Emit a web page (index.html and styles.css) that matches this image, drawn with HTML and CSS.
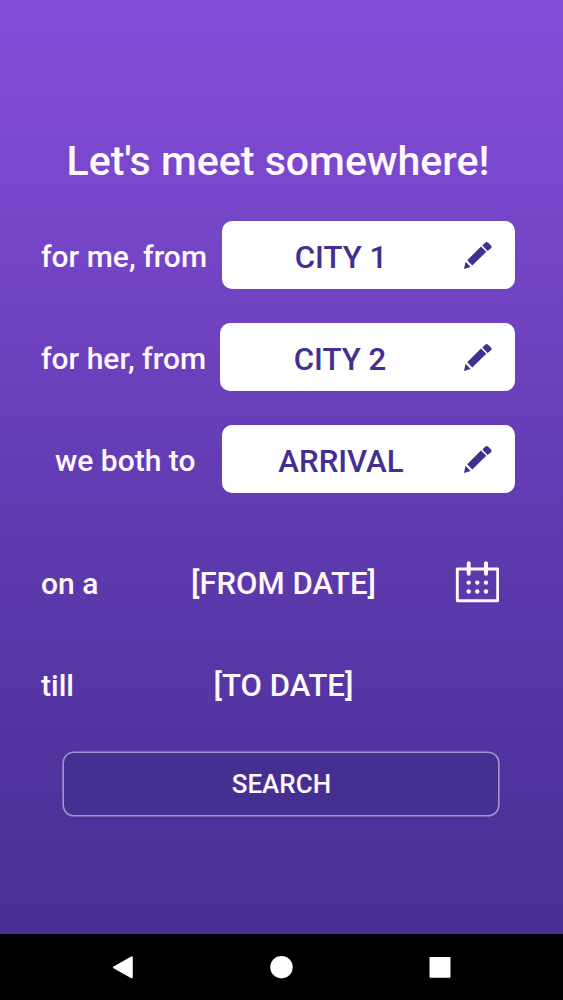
FILE: index.html
```html
<!DOCTYPE html>
<html lang="en">
<head>
<meta charset="utf-8">
<title>Let's meet somewhere!</title>
<link rel="stylesheet" href="styles.css">
</head>
<body>
<main class="screen">
  <h1 class="title">Let's meet somewhere!</h1>
  <div class="row">
    <span class="label">for me, from</span>
    <button class="field"><span class="value">CITY 1</span><svg class="pencil" viewBox="0 0 28 28"><path d="M0 27.900L1.500 20.800l5.200 5.200zM3.200 19.200L17 5.500l5.300 5.300L8.300 24.500zM18.300 4.400l2.900-2.700q1.500-1.500 3 0l2.800 2.900q1.200 1.300 0 2.600l-3.400 2.700z"/></svg></button>
  </div>
  <div class="row">
    <span class="label">for her, from</span>
    <button class="field wide"><span class="value">CITY 2</span><svg class="pencil" viewBox="0 0 28 28"><path d="M0 27.900L1.500 20.800l5.200 5.200zM3.200 19.200L17 5.500l5.300 5.300L8.300 24.500zM18.300 4.400l2.900-2.700q1.500-1.500 3 0l2.800 2.900q1.200 1.300 0 2.600l-3.400 2.700z"/></svg></button>
  </div>
  <div class="row">
    <span class="label both">we both to</span>
    <button class="field"><span class="value">ARRIVAL</span><svg class="pencil" viewBox="0 0 28 28"><path d="M0 27.900L1.500 20.800l5.200 5.200zM3.200 19.200L17 5.500l5.300 5.300L8.300 24.500zM18.300 4.400l2.900-2.700q1.500-1.500 3 0l2.800 2.900q1.200 1.300 0 2.600l-3.400 2.700z"/></svg></button>
  </div>
  <div class="date-row from">
    <span class="label">on a</span><span class="date">[FROM DATE]</span>
    <svg class="calendar" viewBox="0 0 44 42"><path stroke-linejoin="round" d="M2.300 8h40.400v31.800H2.300z"/><path class="rings" d="M13.700 2.200v10.500M31 2.200v10.500"/><g class="dots"><circle cx="13.700" cy="21.600" r="2.200"/><circle cx="22.300" cy="21.600" r="2.200"/><circle cx="31" cy="21.600" r="2.200"/><circle cx="13.700" cy="30.500" r="2.200"/><circle cx="22.300" cy="30.500" r="2.200"/><circle cx="31" cy="30.500" r="2.200"/></g></svg>
  </div>
  <div class="date-row">
    <span class="label">till</span><span class="date">[TO DATE]</span>
  </div>
  <button class="search">SEARCH</button>
</main>
<nav class="navbar">
  <svg viewBox="0 0 563 66"><path stroke="#fff" stroke-width="2" stroke-linejoin="round" d="M114 33.300l17.800-10v20z"/><circle cx="281.500" cy="33.200" r="11.200"/><rect x="429.500" y="23" width="21" height="20.800" rx="1"/></svg>
</nav>
</body>
</html>
```
FILE: styles.css
```css
* { box-sizing: border-box; }
body { margin: 0; width: 563px; height: 1000px; font-family: Roboto, sans-serif; font-weight: 500; color: #fff8ff; display: flex; flex-direction: column; overflow: hidden; }
.screen { height: 934.400px; padding: 136.400px 48px 0 41px; background: linear-gradient(#844ed8, #7646c9 24%, #5e3aae 58%, #4b3199 92%, #483095); }
.title { margin: 0 0 35px; padding-left: 25.500px; font-size: 41.100px; line-height: 50px; font-weight: 500; white-space: nowrap; }
.row { display: flex; align-items: center; justify-content: space-between; height: 68px; margin-bottom: 34px; }
.label { font-size: 30px; white-space: nowrap; padding-top: 3px; }
.both { padding-left: 14px; }
.field { width: 293px; height: 68px; border: 0; border-radius: 10px; background: #fff; color: #432e91; font: 500 31.200px Roboto, sans-serif; padding: 2px 23px 0 0; display: flex; align-items: center; }
.wide { width: 295px; }
.value { flex: 1; padding-right: 4px; padding-top: 2px; text-align: center; }
.pencil { width: 28px; height: 28px; fill: #432e91; margin-top: -2px; }
.date-row { display: grid; grid-template-columns: 100px 285px 1fr; align-items: center; height: 68px; margin-bottom: 34px; }
.from { margin-top: 54.600px; }
.date { font-size: 31.100px; text-align: center; padding-top: 3px; }
.calendar { width: 44px; height: 42px; margin: 1px 0 0 29px; fill: none; stroke: #fff8ff; stroke-width: 2.900; }
.rings { stroke-width: 4; stroke-linecap: round; }
.dots { fill: #fff8ff; stroke: none; }
.search { display: block; width: 436px; height: 64px; margin: 0 0 0 22.400px; padding: 1px 0 0; border: 1px solid #a195c9; border-radius: 11px; background: #452f90; color: #fff8ff; font: 500 26px Roboto, sans-serif; box-shadow: 0 0 0 .6px #a195c9; }
.navbar { flex: 1; background: #000; }
.navbar svg { display: block; width: 563px; height: 66px; fill: #fff; }
```
